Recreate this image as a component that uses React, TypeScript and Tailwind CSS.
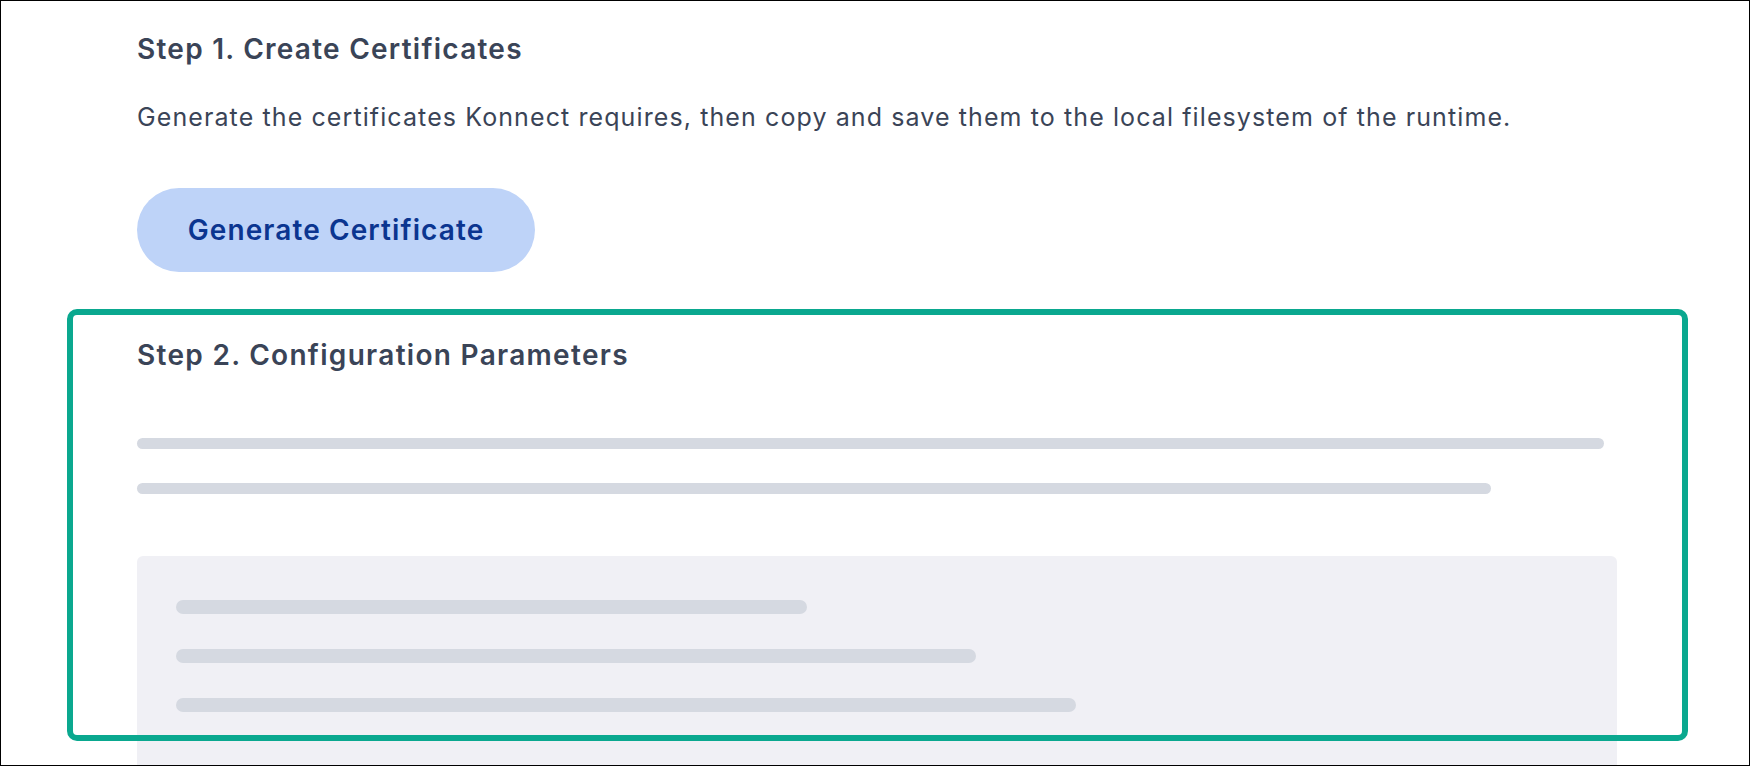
const SkeletonLine = ({ className }: { className: string }) => (
  <div className={`rounded-full bg-[#d5d9e1] ${className}`} />
);

const App = () => {
  return (
    <div className="relative h-[766px] w-[1750px] overflow-hidden border border-black bg-white font-['Inter',sans-serif] text-[#3a4457]">
      <div className="pl-[136px] pt-[31px]">
        <h2 className="text-[28px] leading-[34px] font-semibold tracking-[1.25px]">Step 1. Create Certificates</h2>
        <p className="mt-[33px] text-[25px] leading-[36px] tracking-[1.1px]">
          Generate the certificates Konnect requires, then copy and save them to the local filesystem of the runtime.
        </p>
        <button
          type="button"
          className="mt-[53px] flex h-[84px] w-[398px] items-center justify-center rounded-full bg-[#bed3f8] text-[28px] font-semibold tracking-[1.1px] text-[#0b3590]">
          Generate Certificate
        </button>

        <h2 className="mt-[66px] text-[28px] leading-[34px] font-semibold tracking-[1.3px]">
          Step 2. Configuration Parameters
        </h2>
        <div className="mt-[66px] flex flex-col gap-[34px]">
          <SkeletonLine className="h-[11px] w-[1467px]" />
          <SkeletonLine className="h-[11px] w-[1354px]" />
        </div>

        <div className="mt-[62px] h-[260px] w-[1480px] rounded-[6px] bg-[#f0f0f5] pt-[44px] pl-[39px]">
          <div className="flex flex-col gap-[35px]">
            <SkeletonLine className="h-[14px] w-[631px]" />
            <SkeletonLine className="h-[14px] w-[800px]" />
            <SkeletonLine className="h-[14px] w-[900px]" />
          </div>
        </div>
      </div>

      {/* highlight around step 2 */}
      <div className="pointer-events-none absolute top-[308px] left-[66px] h-[432px] w-[1621px] rounded-[10px] border-[6px] border-[#0aa88f]" />
    </div>
  );
};

export default App;
